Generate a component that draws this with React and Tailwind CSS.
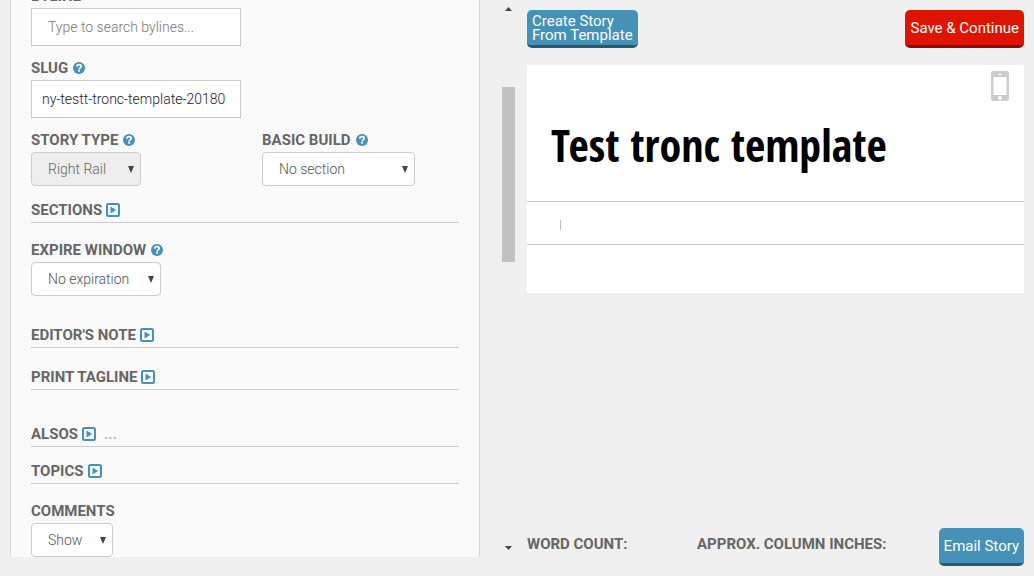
import React from "react";

function HelpIcon() {
  return (
    <svg viewBox="0 0 12 12" className="h-3 w-3 shrink-0" aria-hidden="true">
      <circle cx="6" cy="6" r="6" fill="#4591b8" />
      <path d="M3.800 4.700C3.900 3.300 4.900 2.700 6 2.700s2.200.6 2.200 1.800C8.200 5.900 6.100 5.800 6.100 7.400" fill="none" stroke="#fff" strokeWidth="1.700" />
      <rect x="5.200" y="8" width="1.800" height="1.700" fill="#fff" />
    </svg>
  );
}

function ExpandIcon() {
  return (
    <svg viewBox="0 0 14 14" className="h-3.5 w-3.5 shrink-0" aria-hidden="true">
      <rect x="1" y="1" width="12" height="12" rx="1.500" fill="none" stroke="#4591b8" strokeWidth="2" />
      <path d="M4.500 3.500v7L10.200 7z" fill="#4591b8" />
    </svg>
  );
}

function FieldLabel({ htmlFor, children, help }) {
  return (
    <div className="flex items-center gap-[5px]">
      <label htmlFor={htmlFor} className="text-[15px] leading-5 font-bold whitespace-nowrap text-[#666]">
        {children}
      </label>
      {help && <HelpIcon />}
    </div>
  );
}

function TextField({ id, label, help, inputClass, ...rest }) {
  return (
    <div className="flex flex-col items-start gap-0.5">
      <FieldLabel htmlFor={id} help={help}>{label}</FieldLabel>
      <input
        id={id}
        type="text"
        className={`h-[38px] w-[210px] border border-[#ccc] bg-white text-sm font-light text-[#222] outline-none placeholder:text-[#777] ${inputClass}`}
        {...rest}
      />
    </div>
  );
}

function SelectField({ id, label, help, option, widthClass, disabled }) {
  return (
    <div className="flex flex-col items-start gap-0.5">
      <FieldLabel htmlFor={id} help={help}>{label}</FieldLabel>
      <div className={`relative ${widthClass}`}>
        <select
          id={id}
          disabled={disabled}
          className="h-[34px] w-full appearance-none rounded border border-[#ccc] bg-white pr-6 pl-4 text-sm font-light text-[#555] opacity-100 outline-none disabled:bg-[#eee] disabled:text-[#666]"
        >
          <option>{option}</option>
        </select>
        <svg viewBox="0 0 6 7" className="pointer-events-none absolute top-3.5 right-[7px] h-[7px] w-1.5" aria-hidden="true">
          <path d="M0 0h6L3 7z" fill="#444" />
        </svg>
      </div>
    </div>
  );
}

function Section({ title, note }) {
  return (
    <div className="border-b border-[#ccc] pb-0.5">
      <button type="button" className="flex items-center gap-1 text-[15px] leading-5 font-bold text-[#666]">
        {title}
        <ExpandIcon />
        {note && <span className="pl-1 text-[#bbb]">{note}</span>}
      </button>
    </div>
  );
}

function ActionButton({ children, className }) {
  return (
    <button
      type="button"
      className={`h-[38px] rounded-[5px] border-b-[3px] px-[5px] text-left text-[15px] leading-[14px] font-normal whitespace-nowrap text-white ${className}`}
    >
      {children}
    </button>
  );
}

function ScrollRail() {
  return (
    <div className="flex flex-col items-center pt-[7px] pr-3 pb-[26px] pl-[22px]">
      <svg viewBox="0 0 7 4" className="h-1 w-[7px]" aria-hidden="true">
        <path d="M0 4h7L3.500 0z" fill="#444" />
      </svg>
      <div className="w-full grow pt-[76px]">
        <div className="h-[175px] bg-[#c1c1c1]" />
      </div>
      <svg viewBox="0 0 7 4" className="h-1 w-[7px]" aria-hidden="true">
        <path d="M0 0h7L3.500 4z" fill="#444" />
      </svg>
    </div>
  );
}

function PhoneIcon() {
  return (
    <svg viewBox="0 0 18 30" className="h-[30px] w-[18px]" aria-hidden="true">
      <rect width="18" height="30" rx="2.500" fill="#ccc" />
      <rect x="2.500" y="6" width="13" height="18" fill="#fff" />
      <rect x="7" y="3" width="4" height="1" fill="#fff" />
      <circle cx="9" cy="27" r="1.900" fill="#fff" />
    </svg>
  );
}

export default function App() {
  return (
    <div className="grid h-screen grid-cols-[470fr_47px_497fr] overflow-hidden bg-[#f0f0f0] px-2.5 font-[Roboto,sans-serif]">
      <div className="h-full overflow-hidden pb-[19px]">
        <form className="h-full overflow-hidden border-x border-[#d8d8d8] bg-[linear-gradient(135deg,#ffffff_25%,#f6f6f6_25%,#f6f6f6_50%,#ffffff_50%,#ffffff_75%,#f6f6f6_75%)] bg-size-[4px_4px] px-5">
          <div className="-mt-3.5 flex flex-col">
            <div className="flex flex-col gap-3">
              <TextField id="byline" label="BYLINE" placeholder="Type to search bylines..." inputClass="px-4" />
              <TextField id="slug" label="SLUG" help defaultValue="ny-testt-tronc-template-20180" inputClass="px-2.5" />
              <div className="grid grid-cols-[231fr_197fr]">
                <SelectField id="story-type" label="STORY TYPE" help option="Right Rail" widthClass="w-[110px]" disabled />
                <SelectField id="basic-build" label="BASIC BUILD" help option="No section" widthClass="w-[153px]" />
              </div>
            </div>
            <div className="flex flex-col gap-[17px] pt-3.5">
              <Section title="SECTIONS" />
              <SelectField id="expire" label="EXPIRE WINDOW" help option="No expiration" widthClass="w-[130px]" />
            </div>
            <div className="flex flex-col gap-[19px] pt-[29px]">
              <Section title="EDITOR'S NOTE" />
              <Section title="PRINT TAGLINE" />
            </div>
            <div className="flex flex-col gap-3.5 pt-[34px]">
              <Section title="ALSOS" note="..." />
              <Section title="TOPICS" />
            </div>
            <div className="pt-[17px]">
              <SelectField id="comments" label="COMMENTS" option="Show" widthClass="w-[82px]" />
            </div>
          </div>
        </form>
      </div>
      <ScrollRail />
      <main className="flex flex-col py-2.5">
        <div className="flex items-start justify-between">
          <ActionButton className="border-[#2a5870] bg-[#4591b8]">
            Create Story
            <br />
            From Template
          </ActionButton>
          <ActionButton className="border-[#850c00] bg-[#dd1500]">Save &amp; Continue</ActionButton>
        </div>
        <article className="mt-[17px] bg-white">
          <div className="flex justify-end px-[15px] pt-1.5">
            <button type="button" aria-label="Phone preview">
              <PhoneIcon />
            </button>
          </div>
          <h1 className="px-6 pt-3.5 pb-[26px] font-['Open_Sans_Condensed','Liberation_Sans_Narrow','Open_Sans',sans-serif] text-[44px] leading-[60px] font-bold text-black">
            Test tronc template
          </h1>
          <div className="flex h-11 items-center border-y border-[#ccc] px-8">
            <span className="mt-1 ml-px h-2.5 w-px bg-[#d9b3b3]" />
          </div>
          <div className="h-12" />
        </article>
        <footer className="mt-auto flex items-start text-[15px] leading-5 font-bold text-[#666]">
          <div className="w-[170px] pt-1.5">WORD COUNT:</div>
          <div className="grow pt-1.5">APPROX. COLUMN INCHES:</div>
          <ActionButton className="border-[#2a5870] bg-[#4591b8]">Email Story</ActionButton>
        </footer>
      </main>
    </div>
  );
}
